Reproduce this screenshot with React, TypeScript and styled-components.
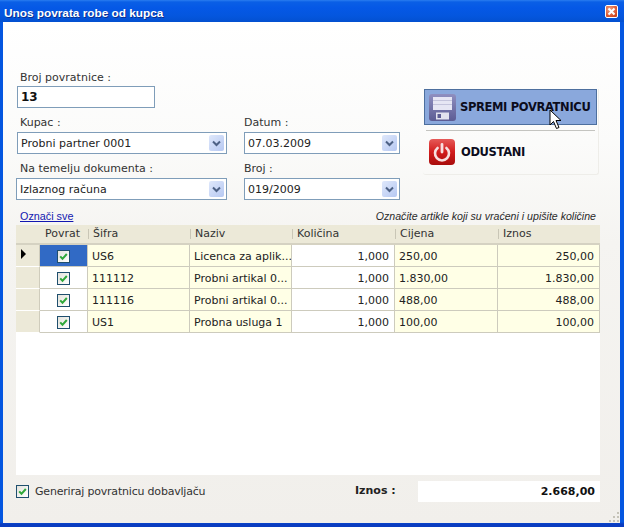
import React from "react";
import styled, { createGlobalStyle } from "styled-components";

const Global = createGlobalStyle`
  html, body { margin: 0; padding: 0; background: #0a4fd8; }
  #root { width: 624px; height: 527px; }
  * { box-sizing: border-box; }
`;

const Window = styled.div`
  position: relative;
  width: 624px;
  height: 527px;
  display: flex;
  flex-direction: column;
  overflow: hidden;
  font-family: "DejaVu Sans", Verdana, sans-serif;
  font-size: 11px;
  color: #222;
  background: linear-gradient(180deg, #0456e0 0, #0456e0 522px, #0a3cc0 524px, #0a3cc0 100%);
`;

const TitleBar = styled.div`
  height: 22px;
  flex: none;
  display: flex;
  align-items: center;
  justify-content: space-between;
  padding: 3px 3px 0 4px;
  background: linear-gradient(180deg, #2a7df0 0, #0a5fe6 2px, #0558e6 8px, #0456de 16px, #0350d0 22px);
`;

const Title = styled.span`
  font-family: "Liberation Sans", Arial, sans-serif;
  font-weight: 700;
  font-size: 11.8px;
  color: #fff;
  text-shadow: 1px 1px 0 #0a2f90;
`;

const CloseButton = styled.div`
  width: 13px;
  height: 13px;
  margin: -2px 3px 0 0;
  border: 1px solid #fff;
  border-radius: 2px;
  background: radial-gradient(circle at 35% 30%, #f0a080, #d8502a 70%, #b93a18);
  display: flex;
  align-items: center;
  justify-content: center;
`;

const Client = styled.div`
  flex: 1;
  margin: 0 4px 4px 3px;
  min-height: 0;
  display: flex;
  flex-direction: column;
  padding: 49px 20px 0 13px;
  background: linear-gradient(180deg, #ffffff 0, #fbfbfa 120px, #f5f4f1 220px, #f1efeb 100%);
`;

const TopArea = styled.div`
  display: flex;
  height: 136px;
  flex: none;
`;

const FormColumn = styled.div`
  width: 407px;
  flex: none;
  padding-left: 1px;
  display: flex;
  flex-direction: column;
`;

const Row = styled.div`
  display: flex;
  gap: 17px;
  margin-top: 8px;
`;

const Field = styled.div<{ $w: number }>`
  width: ${(p) => p.$w}px;
  flex: none;
  display: flex;
  flex-direction: column;
`;

const Label = styled.label<{ $flush?: boolean; $short?: boolean }>`
  height: ${(p) => (p.$short ? 15 : 16)}px;
  padding-left: ${(p) => (p.$flush ? 0 : 3)}px;
  line-height: 14px;
  white-space: nowrap;
  color: #333;
`;

const TextInput = styled.div`
  width: 138px;
  height: 22px;
  border: 1px solid #7f9db9;
  background: #fff;
  padding-left: 3px;
  line-height: 20px;
  font-weight: 700;
  font-size: 12px;
  color: #111;
`;

const Select = styled.div<{ $outdent?: boolean }>`
  height: 22px;
  margin-left: ${(p) => (p.$outdent ? -1 : 0)}px;
  border: 1px solid #7f9db9;
  background: #fff;
  display: flex;
  align-items: center;
  justify-content: space-between;
  padding: 0 1px 0 3px;
  color: #222;
`;

const SelectArrow = styled.div`
  width: 15px;
  height: 16px;
  margin-right: 1px;
  border-radius: 2px;
  background: linear-gradient(135deg, #dfe8fb, #b6c8f2);
  display: flex;
  align-items: center;
  justify-content: center;
`;

const ActionPanel = styled.div`
  margin-top: 18px;
  width: 176px;
  height: 86px;
  padding-left: 1px;
  border-right: 1px solid #eeede9;
  border-bottom: 1px solid #eeede9;
  border-radius: 0 0 3px 3px;
  display: flex;
  flex-direction: column;
  align-items: flex-start;
`;

const ActionButton = styled.div<{ $active?: boolean }>`
  width: 173px;
  height: 36px;
  flex: none;
  display: flex;
  align-items: center;
  gap: 4px;
  padding-left: 4px;
  font-weight: 700;
  font-size: 11.5px;
  color: #0c0c1c;
  letter-spacing: -0.35px;
  border: 1px solid ${(p) => (p.$active ? "#4d6f9e" : "transparent")};
  background: ${(p) => (p.$active ? "#8aa8dc" : "transparent")};
`;

const Divider = styled.div`
  width: 169px;
  height: 1px;
  flex: none;
  margin: 5px 0 3px 2px;
  background: #c4c4c0;
`;

const LinkRow = styled.div`
  display: flex;
  justify-content: space-between;
  align-items: center;
  height: 14px;
  margin-top: 2px;
  padding: 0 4px;
`;

const SelectAll = styled.a`
  font-family: "Liberation Sans", Arial, sans-serif;
  font-size: 10.8px;
  color: #1216b0;
  text-decoration: underline;
`;

const Hint = styled.span`
  font-family: "Liberation Sans", Arial, sans-serif;
  font-style: italic;
  font-size: 10.6px;
  color: #2a2a2a;
`;

const GridBox = styled.div`
  margin-top: 2px;
  width: 584px;
  height: 250px;
  flex: none;
  background: #fff;
`;

const GRID = "24px 48px 102px 102px 103px 103px 102px";

const HeaderRow = styled.div`
  display: grid;
  grid-template-columns: ${GRID};
  height: 20px;
  background: #ece9d8;
  border-bottom: 2px solid #d5d2c2;
`;

const HeaderCell = styled.div`
  position: relative;
  padding-left: 5px;
  line-height: 18px;
  color: #333;
  white-space: nowrap;
  &:not(:first-child):not(:nth-child(2))::before {
    content: "";
    position: absolute;
    left: 0;
    top: 4px;
    bottom: 4px;
    width: 1px;
    background: #c9c6b6;
  }
`;

const DataRow = styled.div`
  display: grid;
  grid-template-columns: ${GRID};
  height: 22px;
`;

const RowHeader = styled.div`
  background: #ece9d8;
  border-bottom: 1px solid #fff;
  border-right: 1px solid #cfccbc;
  display: flex;
  align-items: center;
  padding-left: 5px;
`;

const Marker = styled.div`
  width: 0;
  height: 0;
  border-left: 5px solid #000;
  border-top: 5px solid transparent;
  border-bottom: 5px solid transparent;
  margin-top: -4px;
`;

const Cell = styled.div<{ $bg?: string; $right?: boolean }>`
  background: ${(p) => p.$bg ?? "#ffffe6"};
  border-right: 1px solid #cdcbbd;
  border-bottom: 1px solid #cdcbbd;
  padding: 0 ${(p) => (p.$right ? 5 : 3)}px 0 4px;
  line-height: 23px;
  color: #222;
  white-space: nowrap;
  overflow: hidden;
  text-align: ${(p) => (p.$right ? "right" : "left")};
`;

const CheckCell = styled(Cell)`
  display: flex;
  align-items: center;
  justify-content: center;
  padding: 1px 0 0;
`;

const CheckBox = styled.span`
  width: 13px;
  height: 13px;
  flex: none;
  display: inline-flex;
  align-items: center;
  justify-content: center;
  background: linear-gradient(135deg, #e4e3dc, #fff);
  border: 1px solid #1f4f6e;
`;

const Footer = styled.div`
  display: grid;
  grid-template-columns: 339px 63px 182px;
  height: 42px;
  padding-top: 6px;
  align-items: start;
`;

const CheckLabel = styled.div`
  display: flex;
  align-items: center;
  gap: 6px;
  height: 20px;
  letter-spacing: -0.2px;
  color: #333;
`;

const TotalLabel = styled.div`
  padding-top: 3px;
  font-weight: 700;
  font-size: 11px;
  color: #222;
`;

const TotalValue = styled.div`
  height: 21px;
  background: #fff;
  text-align: right;
  padding-right: 5px;
  line-height: 21px;
  font-weight: 700;
  font-size: 11px;
  color: #111;
`;

const Cursor = styled.svg`
  position: absolute;
  left: 549px;
  top: 109px;
`;

const Grip = styled.svg`
  position: absolute;
  right: 4px;
  bottom: 4px;
`;

const Arrow = () => (
  <svg width="9" height="7" viewBox="0 0 9 7">
    <path d="M1 1.5 L4.5 5 L8 1.5" fill="none" stroke="#4d6185" strokeWidth="2" />
  </svg>
);

const Check = () => (
  <CheckBox>
    <svg width="9" height="9" viewBox="0 0 9 9">
      <path d="M1.2 4.4 L3.5 6.8 L7.8 2" fill="none" stroke="#2fa83a" strokeWidth="2" />
    </svg>
  </CheckBox>
);

const SaveIcon = () => (
  <svg width="27" height="27" viewBox="0 0 27 27">
    <defs>
      <linearGradient id="fl" x1="0" y1="0" x2="0" y2="1">
        <stop offset="0" stopColor="#8f8fc0" />
        <stop offset="1" stopColor="#5c5c94" />
      </linearGradient>
    </defs>
    <rect x="0" y="0" width="27" height="27" rx="3" fill="url(#fl)" />
    <rect x="4" y="3" width="19" height="13" fill="#e6e6f4" />
    <rect x="4" y="6" width="19" height="1" fill="#c4c4dc" />
    <rect x="4" y="10" width="19" height="1" fill="#c4c4dc" />
    <rect x="7" y="18.5" width="13" height="7" fill="#e2e2ee" />
    <rect x="8.5" y="20" width="3.5" height="4" fill="#5c5c94" />
  </svg>
);

const PowerIcon = () => (
  <svg width="28" height="27" viewBox="0 0 28 27">
    <defs>
      <linearGradient id="pw" x1="0" y1="0" x2="0" y2="1">
        <stop offset="0" stopColor="#e65a58" />
        <stop offset="0.5" stopColor="#d21c1c" />
        <stop offset="1" stopColor="#a80c0c" />
      </linearGradient>
    </defs>
    <rect x="0" y="0" width="26" height="26" rx="4" fill="url(#pw)" />
    <path d="M8.6 9 A7 7 0 1 0 17.4 9" fill="none" stroke="#f8e0e0" strokeWidth="2.6" strokeLinecap="round" />
    <path d="M13 5.5 V13" fill="none" stroke="#f8e0e0" strokeWidth="2.8" strokeLinecap="round" />
  </svg>
);

const rows = [
  { code: "US6", name: "Licenca za aplik...", qty: "1,000", price: "250,00", total: "250,00" },
  { code: "111112", name: "Probni artikal 0...", qty: "1,000", price: "1.830,00", total: "1.830,00" },
  { code: "111116", name: "Probni artikal 0...", qty: "1,000", price: "488,00", total: "488,00" },
  { code: "US1", name: "Probna usluga 1", qty: "1,000", price: "100,00", total: "100,00" },
];

export default function App() {
  return (
    <Window>
      <Global />
      <TitleBar>
        <Title>Unos povrata robe od kupca</Title>
        <CloseButton>
          <svg width="9" height="9" viewBox="0 0 9 9">
            <path d="M1.5 1.5 L7.5 7.5 M7.5 1.5 L1.5 7.5" stroke="#fff" strokeWidth="2" />
          </svg>
        </CloseButton>
      </TitleBar>
      <Client>
        <TopArea>
          <FormColumn>
            <Field $w={210}>
              <Label $short>Broj povratnice :</Label>
              <TextInput>13</TextInput>
            </Field>
            <Row>
              <Field $w={210}>
                <Label>Kupac :</Label>
                <Select>
                  Probni partner 0001
                  <SelectArrow><Arrow /></SelectArrow>
                </Select>
              </Field>
              <Field $w={156}>
                <Label $flush>Datum :</Label>
                <Select>
                  07.03.2009
                  <SelectArrow><Arrow /></SelectArrow>
                </Select>
              </Field>
            </Row>
            <Row>
              <Field $w={210}>
                <Label>Na temelju dokumenta :</Label>
                <Select $outdent>
                  Izlaznog računa
                  <SelectArrow><Arrow /></SelectArrow>
                </Select>
              </Field>
              <Field $w={156}>
                <Label $flush>Broj :</Label>
                <Select>
                  019/2009
                  <SelectArrow><Arrow /></SelectArrow>
                </Select>
              </Field>
            </Row>
          </FormColumn>
          <ActionPanel>
            <ActionButton $active>
              <SaveIcon />
              SPREMI POVRATNICU
            </ActionButton>
            <Divider />
            <ActionButton>
              <PowerIcon />
              ODUSTANI
            </ActionButton>
          </ActionPanel>
        </TopArea>
        <LinkRow>
          <SelectAll>Označi sve</SelectAll>
          <Hint>Označite artikle koji su vraćeni i upišite količine</Hint>
        </LinkRow>
        <GridBox>
          <HeaderRow>
            <HeaderCell />
            <HeaderCell>Povrat</HeaderCell>
            <HeaderCell>Šifra</HeaderCell>
            <HeaderCell>Naziv</HeaderCell>
            <HeaderCell>Količina</HeaderCell>
            <HeaderCell>Cijena</HeaderCell>
            <HeaderCell>Iznos</HeaderCell>
          </HeaderRow>
          {rows.map((r, i) => (
            <DataRow key={r.code}>
              <RowHeader>{i === 0 && <Marker />}</RowHeader>
              <CheckCell $bg={i === 0 ? "#316ac5" : "#fff"}><Check /></CheckCell>
              <Cell>{r.code}</Cell>
              <Cell>{r.name}</Cell>
              <Cell $bg="#fff" $right>{r.qty}</Cell>
              <Cell>{r.price}</Cell>
              <Cell $right>{r.total}</Cell>
            </DataRow>
          ))}
        </GridBox>
        <Footer>
          <CheckLabel>
            <Check />
            Generiraj povratnicu dobavljaču
          </CheckLabel>
          <TotalLabel>Iznos :</TotalLabel>
          <TotalValue>2.668,00</TotalValue>
        </Footer>
      </Client>
      <Cursor width="14" height="22" viewBox="0 0 14 22">
        <path d="M1 1 V16 L4.5 12.5 L7.5 19.5 L10 18.5 L7 11.5 H12 Z" fill="#fff" stroke="#000" strokeWidth="1" />
      </Cursor>
      <Grip width="12" height="12" viewBox="0 0 12 12">
        <path d="M9 1h2v2H9zM5 5h2v2H5zM9 5h2v2H9zM1 9h2v2H1zM5 9h2v2H5zM9 9h2v2H9z" fill="#c5c3b8" />
      </Grip>
    </Window>
  );
}
